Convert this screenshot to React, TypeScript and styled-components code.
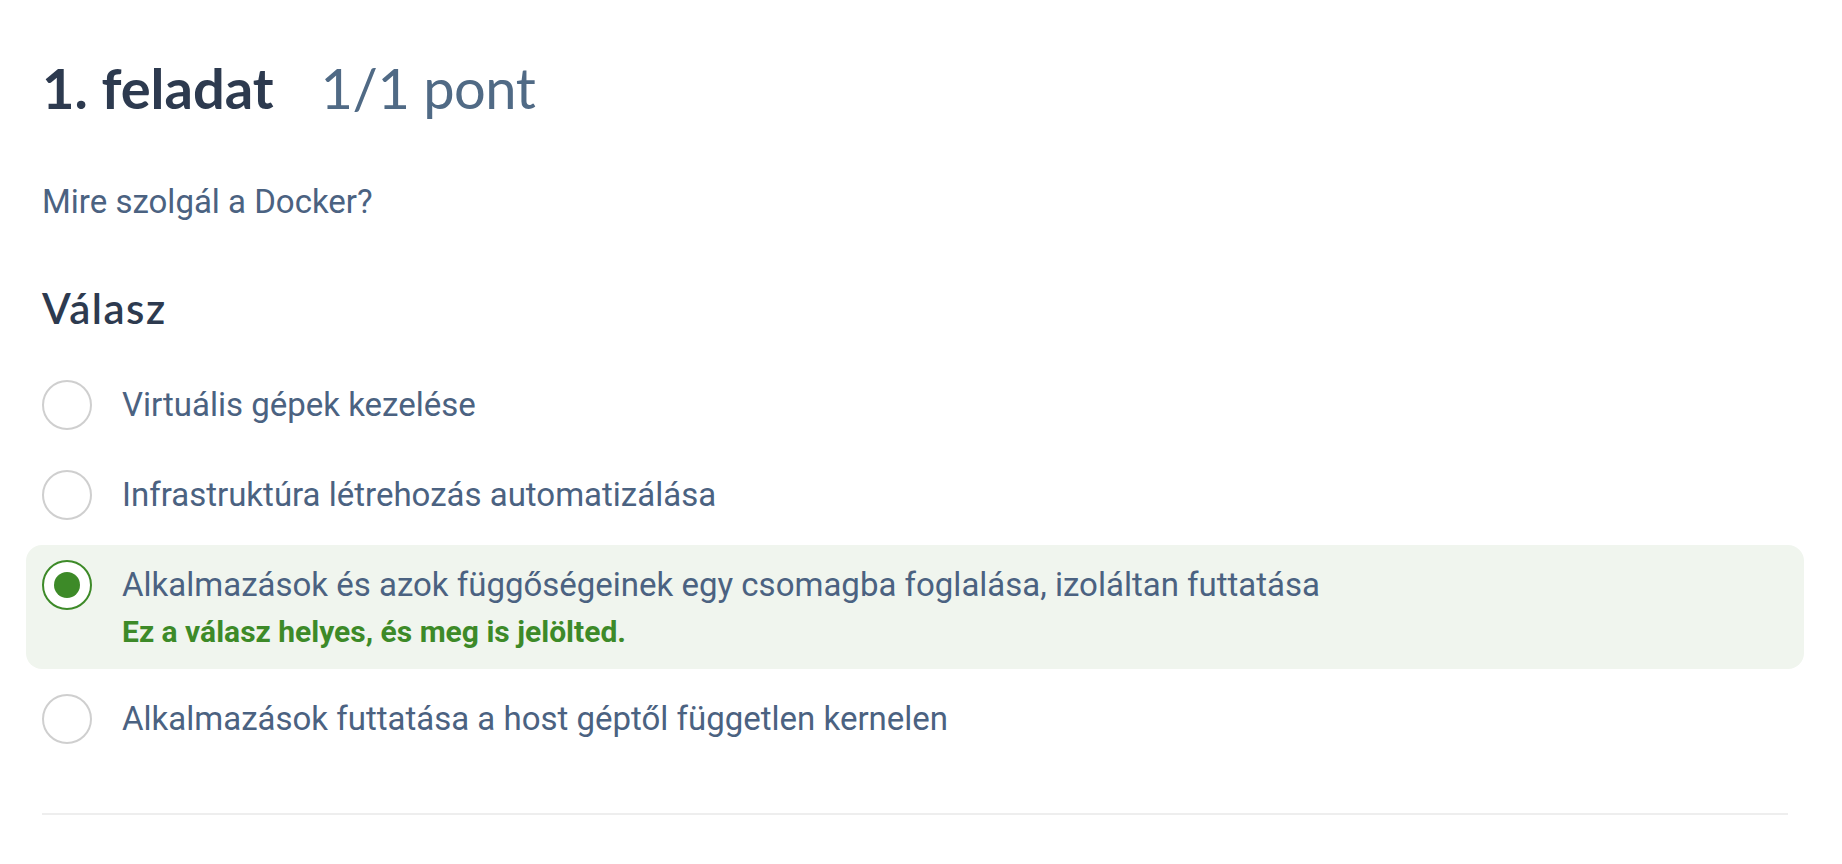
import React from "react";
import styled, { createGlobalStyle } from "styled-components";

interface Option {
  id: number;
  text: string;
  selected?: boolean;
  feedback?: string;
}

const options: Option[] = [
  { id: 1, text: "Virtuális gépek kezelése" },
  { id: 2, text: "Infrastruktúra létrehozás automatizálása" },
  {
    id: 3,
    text: "Alkalmazások és azok függőségeinek egy csomagba foglalása, izoláltan futtatása",
    selected: true,
    feedback: "Ez a válasz helyes, és meg is jelölted.",
  },
  { id: 4, text: "Alkalmazások futtatása a host géptől független kernelen" },
];

export default function App() {
  return (
    <>
      <GlobalStyle />
      <Page>
        <TaskHeader>
          <TaskTitle>1. feladat</TaskTitle>
          <TaskScore>1/1 pont</TaskScore>
        </TaskHeader>

        <Question>Mire szolgál a Docker?</Question>

        <AnswerTitle>Válasz</AnswerTitle>

        <OptionList>
          {options.map((option) => (
            <OptionRow key={option.id} $selected={option.selected}>
              <Radio $selected={option.selected} />
              <OptionBody>
                <OptionText>{option.text}</OptionText>
                {option.feedback && <Feedback>{option.feedback}</Feedback>}
              </OptionBody>
            </OptionRow>
          ))}
        </OptionList>

        <Divider />
      </Page>
    </>
  );
}

const GlobalStyle = createGlobalStyle`
  html, body {
    margin: 0;
    padding: 0;
    background: #ffffff;
  }

  body {
    font-family: Roboto, "Noto Sans", sans-serif;
  }
`;

const Page = styled.main`
  padding: 54px 54px 50px 42px;
`;

const TaskHeader = styled.h1`
  display: flex;
  align-items: baseline;
  gap: 47px;
  margin: 0;
  font-family: Lato, "Noto Sans", sans-serif;
  font-size: 56px;
  line-height: 67px;
`;

const TaskTitle = styled.span`
  color: #2d3a4f;
  font-weight: 700;
`;

const TaskScore = styled.span`
  color: #506a85;
  font-weight: 400;
  letter-spacing: -0.5px;
`;

const Question = styled.p`
  margin: 57px 0 0;
  color: #4b6281;
  font-size: 33px;
  line-height: 48px;
`;

const AnswerTitle = styled.h2`
  margin: 58px 0 0;
  color: #2d3a4f;
  font-family: Lato, "Noto Sans", sans-serif;
  font-size: 42px;
  font-weight: 600;
  letter-spacing: 1.5px;
  line-height: 48px;
`;

const OptionList = styled.div`
  display: flex;
  flex-direction: column;
  gap: 10px;
  margin: 33px -16px 0;
`;

const OptionRow = styled.div<{ $selected?: boolean }>`
  display: flex;
  align-items: flex-start;
  gap: 30px;
  padding: 15px 16px;
  border-radius: 16px;
  background: ${({ $selected }) => ($selected ? "#f0f5ee" : "transparent")};
`;

const Radio = styled.span<{ $selected?: boolean }>`
  position: relative;
  flex: 0 0 auto;
  box-sizing: border-box;
  width: 50px;
  height: 50px;
  border-radius: 50%;
  background: #ffffff;
  border: 2px solid ${({ $selected }) => ($selected ? "#3d8a28" : "#cfcfcf")};

  &::after {
    content: "";
    display: ${({ $selected }) => ($selected ? "block" : "none")};
    position: absolute;
    top: 50%;
    left: 50%;
    width: 26px;
    height: 26px;
    border-radius: 50%;
    background: #3d8a28;
    transform: translate(-50%, -50%);
  }
`;

const OptionBody = styled.div`
  display: flex;
  flex-direction: column;
`;

const OptionText = styled.span`
  color: #4b6281;
  font-size: 33px;
  line-height: 50px;
`;

const Feedback = styled.span`
  color: #3d8a28;
  font-size: 30px;
  font-weight: 700;
  line-height: 44px;
`;

const Divider = styled.hr`
  margin: 54px 0 0;
  height: 2px;
  border: none;
  background: #eeeeee;
`;
